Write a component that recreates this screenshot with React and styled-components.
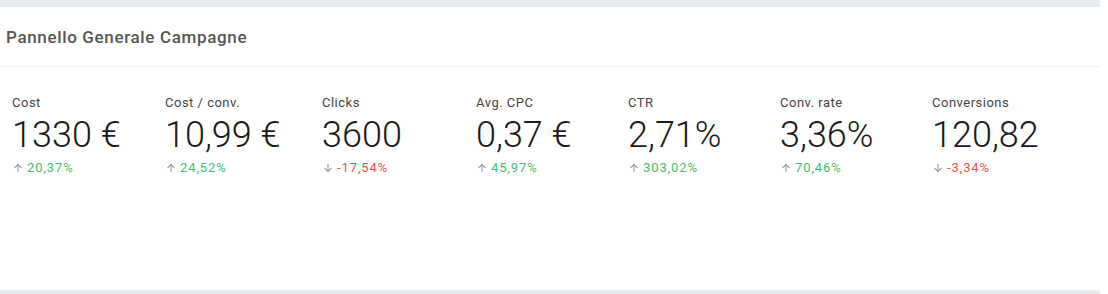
import React from "react";
import styled, { createGlobalStyle } from "styled-components";

const Global = createGlobalStyle`
  html, body { margin: 0; padding: 0; background: #ffffff; }
  body { font-family: Roboto, "Liberation Sans", Arial, sans-serif; }
`;

const Page = styled.div`
  width: 1100px;
  height: 294px;
  background: #e8ebee;
  padding-top: 7px;
  box-sizing: border-box;
`;

const Card = styled.section`
  background: #ffffff;
  height: 284px;
  display: flex;
  flex-direction: column;
  border-bottom: 1px solid #eef0f2;
  box-sizing: border-box;
`;

const Header = styled.header`
  height: 60px;
  display: flex;
  align-items: center;
  padding: 0 6px;
  border-bottom: 1px solid #eeeff1;
  box-sizing: border-box;
`;

const Title = styled.h2`
  margin: 0;
  font-size: 17px;
  font-weight: 500;
  color: #555;
  letter-spacing: 0.65px;
`;

const Metrics = styled.div`
  display: grid;
  grid-template-columns: 153px 157px 154px 152px 152px 152px auto;
  padding: 28px 12px 0;
`;

const Metric = styled.div`
  display: flex;
  flex-direction: column;
`;

const Label = styled.div`
  font-size: 13px;
  line-height: 16px;
  color: #444;
  letter-spacing: 0.5px;
`;

const Value = styled.div`
  margin-top: 4px;
  font-size: 36px;
  line-height: 40px;
  font-weight: 300;
  color: #1a1a1a;
  white-space: nowrap;
`;

const Change = styled.div`
  margin-top: 5px;
  display: flex;
  align-items: center;
  gap: 4px;
  font-size: 13px;
  line-height: 16px;
  letter-spacing: 0.9px;
  color: ${(p) => (p.$up ? "#3fbf74" : "#ef4f4f")};
`;

const Arrow = ({ up }) => (
  <svg width="10" height="10" viewBox="0 0 10 10" style={{ marginLeft: 1 }}>
    <g
      stroke="#9a9a9a"
      strokeWidth="1.1"
      fill="none"
      strokeLinecap="round"
      strokeLinejoin="round"
      transform={up ? undefined : "rotate(180 5 5)"}
    >
      <path d="M5 1.5 V8.8" />
      <path d="M1.8 4.7 L5 1.5 L8.2 4.7" />
    </g>
  </svg>
);

const data = [
  { label: "Cost", value: "1330 €", change: "20,37%", up: true },
  { label: "Cost / conv.", value: "10,99 €", change: "24,52%", up: true },
  { label: "Clicks", value: "3600", change: "-17,54%", up: false },
  { label: "Avg. CPC", value: "0,37 €", change: "45,97%", up: true },
  { label: "CTR", value: "2,71%", change: "303,02%", up: true },
  { label: "Conv. rate", value: "3,36%", change: "70,46%", up: true },
  { label: "Conversions", value: "120,82", change: "-3,34%", up: false },
];

export default function App() {
  return (
    <>
      <Global />
      <Page>
        <Card>
          <Header>
            <Title>Pannello Generale Campagne</Title>
          </Header>
          <Metrics>
            {data.map((m) => (
              <Metric key={m.label}>
                <Label>{m.label}</Label>
                <Value>{m.value}</Value>
                <Change $up={m.up}>
                  <Arrow up={m.up} />
                  <span>{m.change}</span>
                </Change>
              </Metric>
            ))}
          </Metrics>
        </Card>
      </Page>
    </>
  );
}
